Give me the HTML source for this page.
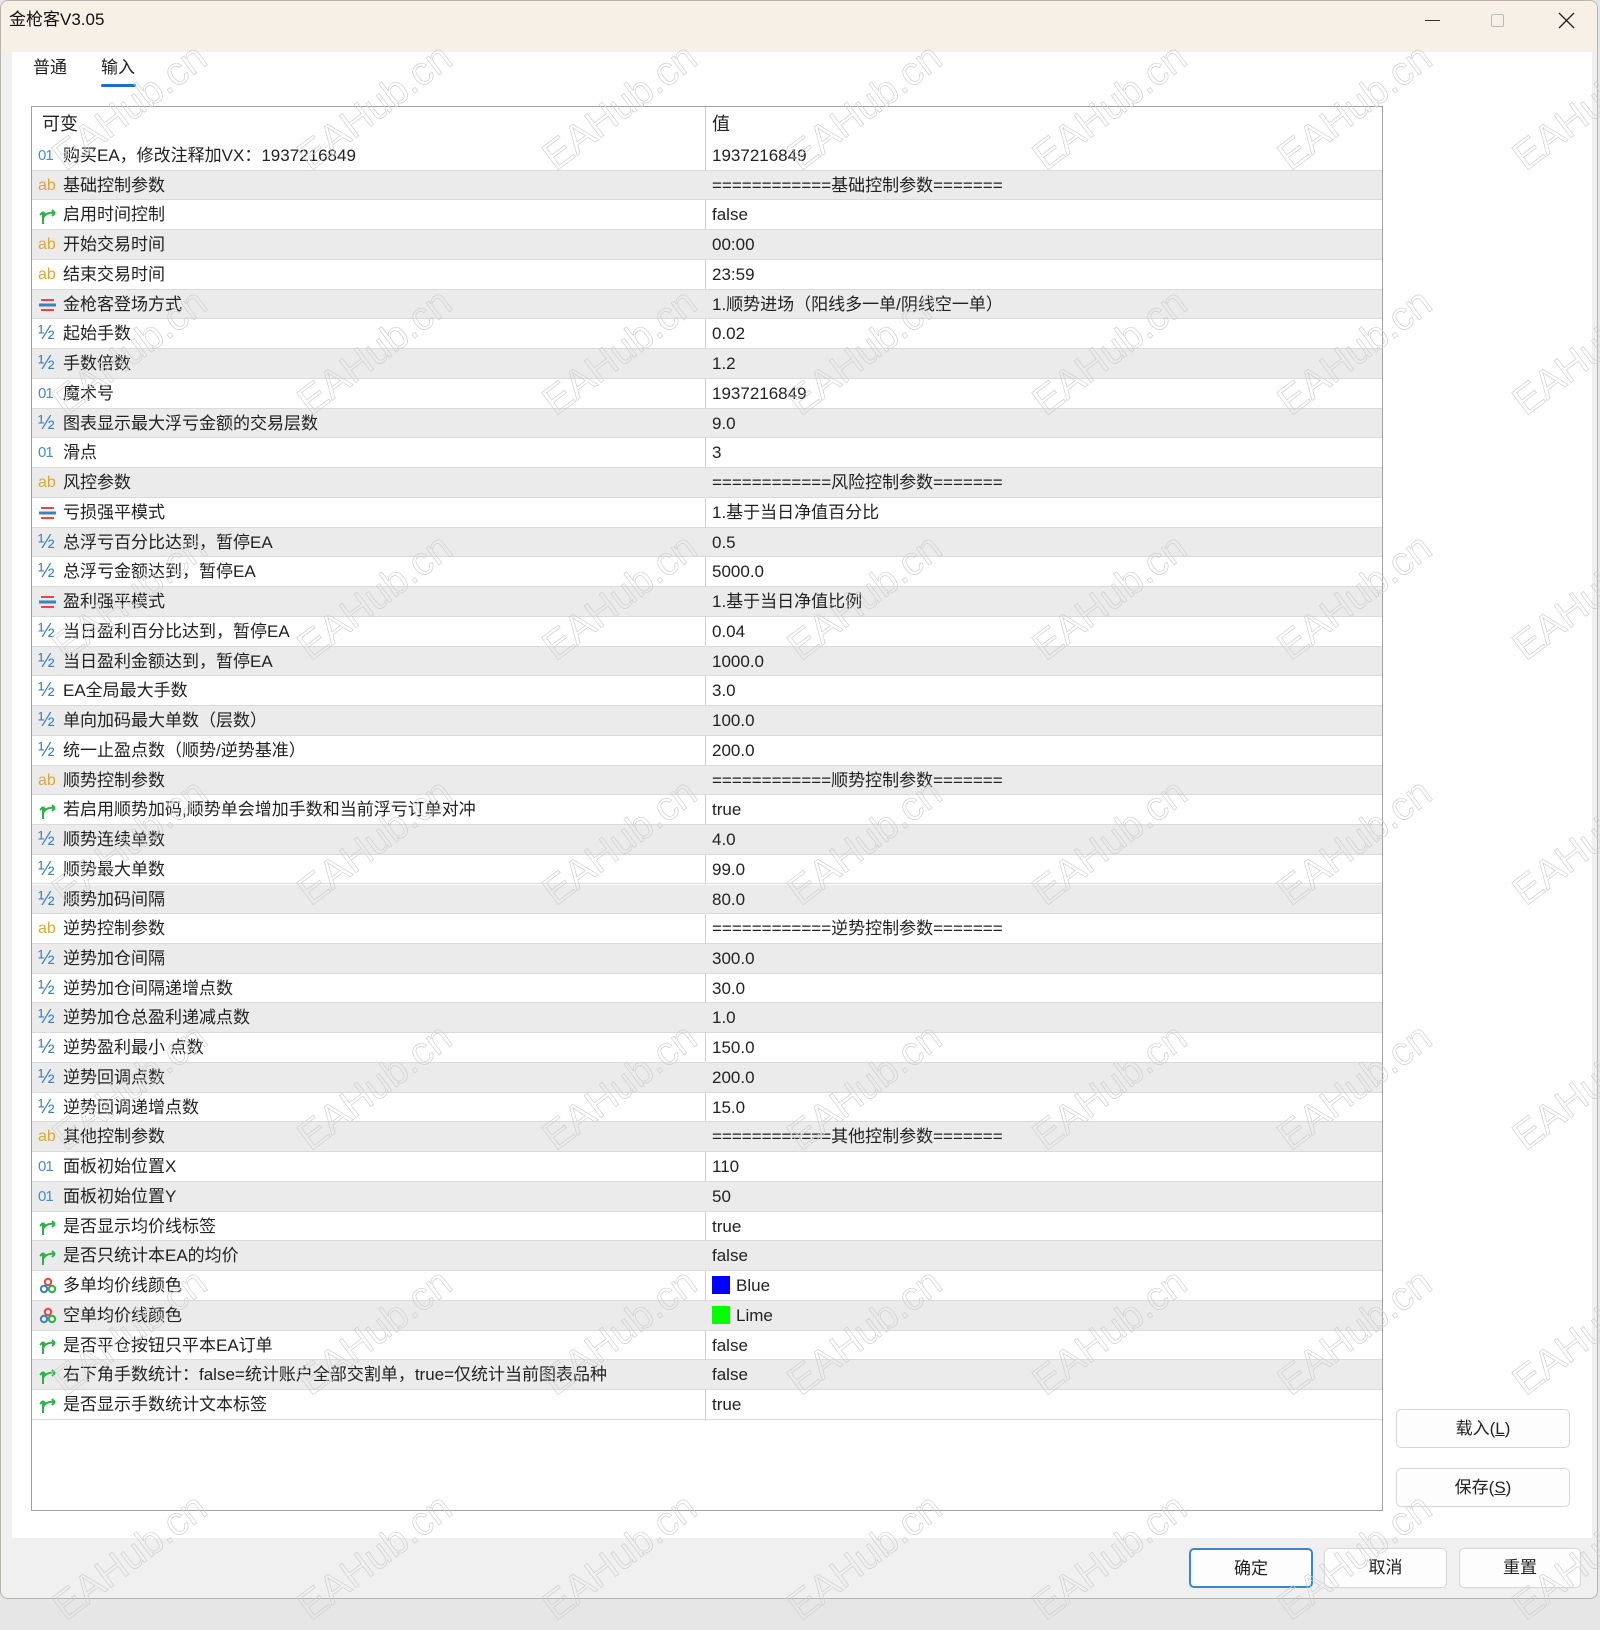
<!DOCTYPE html>
<html><head><meta charset="utf-8"><style>
*{margin:0;padding:0;box-sizing:border-box}
body{width:1600px;height:1601px;background:#e6e6e6;position:relative;overflow:hidden;font-family:"Liberation Sans","Noto Sans CJK SC",sans-serif;color:#222}
.win{position:absolute;left:0;top:0;width:1598px;height:1599px;background:#f0f0f0;border:1px solid #b8b4ae;border-radius:8px;overflow:hidden}
.title{position:absolute;left:0;top:0;right:0;height:51px;background:#f7f0e7}
.title span{position:absolute;left:8px;top:0;line-height:38px;font-size:17px;color:#111}
.panel{position:absolute;left:11px;top:51px;width:1580px;height:1486px;background:#fff}
.tab{position:absolute;top:54px;line-height:26px;font-size:17px;color:#222}
.tbl{position:absolute;left:30px;top:105px;width:1352px;height:1405px;border:1px solid #a0a0a0;background:#fff;overflow:hidden}
.hdr{position:absolute;left:0;top:0;width:100%;height:34px;font-size:18px}
.hdr span{position:absolute;top:3px;line-height:28px}
.vline{position:absolute;left:673px;top:0;width:1px;height:1314px;background:#d0d0d0}
.row{position:absolute;left:0;width:100%;height:29.74px;border-bottom:1px solid #dadada;font-size:17px;white-space:nowrap;line-height:29px}
.row.g{background:#ebebeb}
.row .ic{position:absolute;left:6px;top:0;width:22px;height:29px;font-size:14px;line-height:29px}
.row .ic svg{vertical-align:middle}
.row .n{position:absolute;left:31px;top:0}
.row .v{position:absolute;left:680px;top:0}
.btn{position:absolute;background:#fdfdfd;border:1px solid #d6d6d6;border-radius:5px;font-size:17px;text-align:center;line-height:38px;color:#222}
.wm{position:absolute;font-size:40px;color:transparent;-webkit-text-stroke:0.7px #cfcfcf;transform:rotate(-37deg);font-family:"Liberation Sans",sans-serif;white-space:nowrap;pointer-events:none}
</style></head><body>
<div class="win">
<div class="title"><span>金枪客V3.05</span>
<div style="position:absolute;left:1424px;top:19px;width:15px;height:1px;background:#333"></div>
<div style="position:absolute;left:1490px;top:13px;width:13px;height:13px;border:1px solid #bbb;border-radius:2px"></div>
<svg style="position:absolute;left:1557px;top:11px" width="17" height="17"><path d="M1 1L16 16M16 1L1 16" stroke="#222" stroke-width="1.3"/></svg>
</div>
<div class="panel"></div>
<div class="tab" style="left:32px">普通</div>
<div class="tab" style="left:100px">输入</div>
<div style="position:absolute;left:100px;top:83px;width:35px;height:3px;background:#1a6fd0;border-radius:2px"></div>
<div class="tbl" id="t">
<div class="hdr"><span style="left:10px">可变</span><span style="left:680px">值</span></div>
<div class="vline"></div>
</div>
<div class="btn" style="left:1395px;top:1408px;width:174px;height:39px">载入(<u>L</u>)</div>
<div class="btn" style="left:1395px;top:1467px;width:174px;height:39px">保存(<u>S</u>)</div>
<div class="btn" style="left:1188px;top:1547px;width:124px;height:40px;border:2px solid #3a86c8">确定</div>
<div class="btn" style="left:1323px;top:1547px;width:123px;height:40px">取消</div>
<div class="btn" style="left:1458px;top:1547px;width:122px;height:40px">重置</div>
</div>
<div id="wms"></div>
<script>
var ic={
i:'<span style="color:#4a8cc8;font-size:15px;letter-spacing:-1px">01</span>',
s:'<span style="color:#d9a83a;font-size:16px">ab</span>',
b:'<svg width="20" height="20"><path d="M5 18V6M5 6L2 9M5 6l3 3M5 12c2-4 6-6 12-5M17 7l-3-3M17 7l-3 3" fill="none" stroke="#2eb24a" stroke-width="2"/></svg>',
e:'<svg width="20" height="20"><rect x="3" y="4" width="13" height="2" fill="#e44"/><rect x="1" y="8.5" width="17" height="3" fill="#3a82c4"/><rect x="3" y="14" width="13" height="2" fill="#e44"/></svg>',
d:'<span style="color:#3a82c4;font-size:20px">½</span>',
c:'<svg width="20" height="20"><circle cx="10" cy="6" r="3.2" fill="none" stroke="#e44" stroke-width="2"/><circle cx="6" cy="13" r="3.2" fill="none" stroke="#3a82c4" stroke-width="2"/><circle cx="14" cy="13" r="3.2" fill="none" stroke="#2eb24a" stroke-width="2"/></svg>'};
var R=[
['i','购买EA，修改注释加VX：1937216849','1937216849'],
['s','基础控制参数','============基础控制参数======='],
['b','启用时间控制','false'],
['s','开始交易时间','00:00'],
['s','结束交易时间','23:59'],
['e','金枪客登场方式','1.顺势进场（阳线多一单/阴线空一单）'],
['d','起始手数','0.02'],
['d','手数倍数','1.2'],
['i','魔术号','1937216849'],
['d','图表显示最大浮亏金额的交易层数','9.0'],
['i','滑点','3'],
['s','风控参数','============风险控制参数======='],
['e','亏损强平模式','1.基于当日净值百分比'],
['d','总浮亏百分比达到，暂停EA','0.5'],
['d','总浮亏金额达到，暂停EA','5000.0'],
['e','盈利强平模式','1.基于当日净值比例'],
['d','当日盈利百分比达到，暂停EA','0.04'],
['d','当日盈利金额达到，暂停EA','1000.0'],
['d','EA全局最大手数','3.0'],
['d','单向加码最大单数（层数）','100.0'],
['d','统一止盈点数（顺势/逆势基准）','200.0'],
['s','顺势控制参数','============顺势控制参数======='],
['b','若启用顺势加码,顺势单会增加手数和当前浮亏订单对冲','true'],
['d','顺势连续单数','4.0'],
['d','顺势最大单数','99.0'],
['d','顺势加码间隔','80.0'],
['s','逆势控制参数','============逆势控制参数======='],
['d','逆势加仓间隔','300.0'],
['d','逆势加仓间隔递增点数','30.0'],
['d','逆势加仓总盈利递减点数','1.0'],
['d','逆势盈利最小 点数','150.0'],
['d','逆势回调点数','200.0'],
['d','逆势回调递增点数','15.0'],
['s','其他控制参数','============其他控制参数======='],
['i','面板初始位置X','110'],
['i','面板初始位置Y','50'],
['b','是否显示均价线标签','true'],
['b','是否只统计本EA的均价','false'],
['c','多单均价线颜色','<span style="display:inline-block;width:18px;height:18px;background:#00f;vertical-align:-3px;margin-right:6px"></span>Blue'],
['c','空单均价线颜色','<span style="display:inline-block;width:18px;height:18px;background:#0f0;vertical-align:-3px;margin-right:6px"></span>Lime'],
['b','是否平仓按钮只平本EA订单','false'],
['b','右下角手数统计：false=统计账户全部交割单，true=仅统计当前图表品种','false'],
['b','是否显示手数统计文本标签','true']];
var h='';
R.forEach(function(r,i){h+='<div class="row'+(i%2?' g':'')+'" style="top:'+(34+i*29.74)+'px"><div class="ic">'+ic[r[0]]+'</div><div class="n">'+r[1]+'</div><div class="v">'+r[2]+'</div></div>';});
document.getElementById('t').insertAdjacentHTML('beforeend',h);
var w='';
var ys=[110,355,600,845,1090,1335,1560],xs=[130,375,620,865,1110,1355,1590];
ys.forEach(function(y){xs.forEach(function(x){w+='<div class="wm" style="left:'+(x-90)+'px;top:'+(y-25)+'px">EAHub.cn</div>';});});
document.getElementById('wms').innerHTML=w;
</script>
</body></html>
